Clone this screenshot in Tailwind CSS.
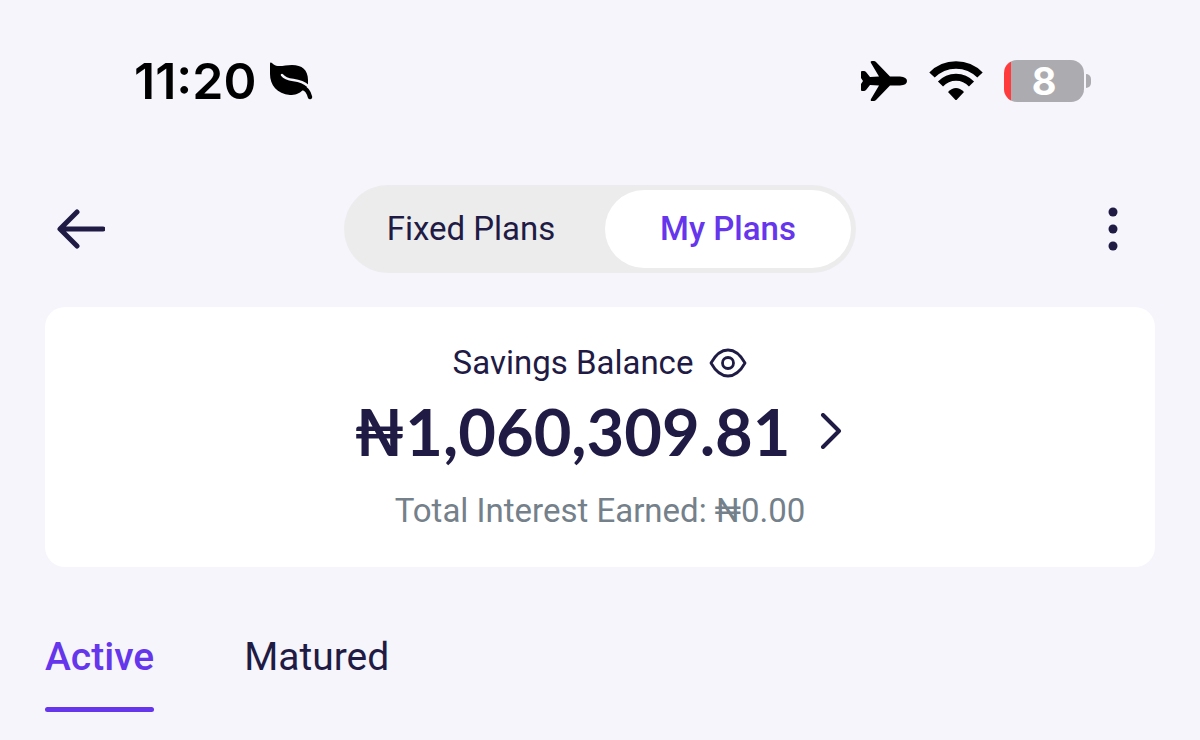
<!DOCTYPE html>
<html lang="en">
<head>
  <meta charset="UTF-8" />
  <meta name="viewport" content="width=device-width, initial-scale=1.0" />
  <title>My Plans</title>
  <script src="https://cdn.jsdelivr.net/npm/@tailwindcss/browser@4"></script>
</head>
<body class="bg-[#f5f5fb] min-h-screen font-[Roboto,sans-serif] text-[#1f1b44]">

  <!-- Status bar -->
  <div class="flex items-center justify-between h-[162px] pl-[134px] pr-[109px] text-black">
    <div class="flex items-center gap-[13px]">
      <span class="font-['Inter',sans-serif] font-semibold text-[50px] leading-none">11:20</span>
      <svg class="w-[46px] h-10" viewBox="0 0 46 40" fill="none" stroke-linecap="round" aria-hidden="true">
        <path d="M1 3C1 1 2 1 4 3C9 7 15 4 23 4C33 4 39 9 39 19V25L34 29C30 33 26 34 21 34C8 33 1 24 1 13Z" fill="currentColor" />
        <path d="M13 14C19 22 29 16 39 25" stroke="#f5f5fb" stroke-width="2.500" />
        <path d="M34 27C38 28 40 32 41 36" stroke="currentColor" stroke-width="4.500" />
      </svg>
    </div>
    <div class="flex items-center">
      <svg class="w-12 h-11 mr-5" viewBox="0 0 48 44" aria-hidden="true">
        <path d="M1 13Q1 12 2 12H4Q5 12 6 13L10 18L19 17.500L11 4Q10 2 12 2H14Q15 2 16 3L30 17.500H40Q47 18 47 22Q47 26 40 26.500H30L16 41Q15 42 14 42H12Q10 42 11 40L19 26.500L10 26L6 31Q5 32 4 32H2Q1 32 1 31V25L3 22L1 19Z" />
      </svg>
      <svg class="w-14 h-11 mr-5" viewBox="0 0 56 44" fill="none" stroke="currentColor" aria-hidden="true">
        <path d="M4 16C17 2.500 39 2.500 52 16" stroke-width="7.500" />
        <path d="M12.500 25C21 16 35 16 43.500 25" stroke-width="7" />
        <path d="M20 33Q28 25 36 33L29 40.500Q28 41.500 27 40.500Z" fill="currentColor" stroke="none" />
      </svg>
      <div class="flex items-center gap-[2px]">
        <div class="flex items-center justify-center w-20 h-[42px] rounded-[13px] bg-linear-to-r from-[#ff3b3b] from-[7px] to-[#acacb0] to-[7px] text-white font-['Inter',sans-serif] font-bold text-[38px] leading-none">8</div>
        <div class="w-[5px] h-[14px] rounded-r-full bg-[#acacb0]"></div>
      </div>
    </div>
  </div>

  <header class="flex items-center justify-between mt-[23px] px-[57px]">
    <button type="button" aria-label="Back" class="w-[60px]">
      <svg class="w-12 h-11" viewBox="0 0 48 44" fill="none" stroke="currentColor" stroke-width="5" stroke-linecap="round" stroke-linejoin="round">
        <path d="M46 22H4M20 5L3 22L20 39" />
      </svg>
    </button>
    <nav class="flex w-[512px] h-[88px] p-[5px] rounded-full bg-[#ececec] text-[33px]">
      <button type="button" class="flex-1 pr-3">Fixed Plans</button>
      <button type="button" class="w-[246px] rounded-full bg-white font-medium text-[#6536ec]">My Plans</button>
    </nav>
    <button type="button" aria-label="More options" class="flex justify-end w-[60px]">
      <svg class="w-[60px] h-11" viewBox="0 0 60 44" fill="currentColor">
        <circle cx="30" cy="5" r="4.500" />
        <circle cx="30" cy="22" r="4.500" />
        <circle cx="30" cy="39" r="4.500" />
      </svg>
    </button>
  </header>

  <main class="px-[45px]">
    <section class="flex flex-col items-center mt-[34px] pt-8 pb-8 rounded-[20px] bg-white">
      <div class="flex items-center gap-4 text-[33px] leading-[48px]">
        <span>Savings Balance</span>
        <button type="button" aria-label="Hide balance">
          <svg class="w-[38px] h-8" viewBox="0 0 38 32" fill="none" stroke="currentColor" stroke-width="2.800">
            <path d="M2 16C7 7 13 3 19 3S31 7 36 16C31 25 25 29 19 29S7 25 2 16Z" stroke-linejoin="round" />
            <circle cx="19" cy="16" r="5.500" />
          </svg>
        </button>
      </div>
      <button type="button" class="flex items-center gap-7 pb-1 pr-1">
        <span class="font-[Lato,sans-serif] font-bold text-[65px] leading-[88px]">₦1,060,309.81</span>
        <svg class="w-6 h-9" viewBox="0 0 24 36" fill="none" stroke="currentColor" stroke-width="4" stroke-linecap="round" stroke-linejoin="round">
          <path d="M4 2L20 18L4 34" />
        </svg>
      </button>
      <p class="mt-2 text-[33px] leading-[48px] text-[#74808a]">Total Interest Earned: ₦0.00</p>
    </section>

    <nav class="flex gap-[90px] mt-[62px] text-[39px] leading-[56px]">
      <a href="#active" class="flex flex-col gap-[22px] font-medium text-[#6536ec]">
        Active
        <span class="h-[5px] rounded-full bg-[#6536ec]"></span>
      </a>
      <a href="#matured">Matured</a>
    </nav>
  </main>

</body>
</html>
